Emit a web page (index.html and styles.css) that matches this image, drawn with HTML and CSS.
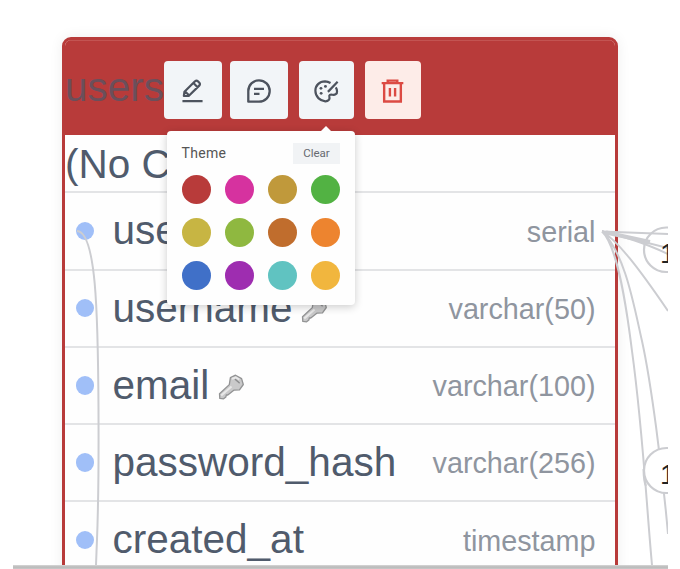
FILE: index.html
```html
<!DOCTYPE html>
<html lang="en">
<head>
<meta charset="utf-8">
<title>Schema diagram</title>
<link rel="stylesheet" href="styles.css">
</head>
<body>
<main class="canvas">
  <section class="table">
    <header class="table-head">
      <span class="table-name">users</span>
      <div class="toolbar">
        <button class="tool" aria-label="Edit"><svg width="23" height="24" viewBox="0 0 24 24"><path d="M3 17.2 3.6 12.8 14.6 1.9Q16.2.6 17.8 2L19 3.2Q20.5 4.8 19 6.4L8 17.2Z M13 3.7l4.3 4.3M4.6 12.8l3.7 3.7M1.5 22.5h21"/></svg></button>
        <button class="tool" aria-label="Comment"><svg width="24" height="24" viewBox="0 0 24 24"><path d="M1.3 22.7V12A10.7 10.7 0 1 1 12 22.7ZM7 9.8h10M7 14.8h5.5"/></svg></button>
        <button class="tool tool-theme" aria-label="Theme"><svg width="25" height="23" viewBox="0 0 26 24"><path d="M17.2 3.1A13 13 0 0 0 11.5 1.5C5.5 1.5 1.4 5.7 1.4 11.3c0 6.1 4.9 10.6 10.3 10.9 3.2.1 5.1-1.8 4.3-4.7-.5-2 .8-2.5 3-2.1 3 .5 5.2-.8 5-3.7-.1-1.5-.5-2.9-1.3-4.1M24.6 1.8 14.5 12.4"/><g class="dots"><circle cx="11.9" cy="6.7" r="1.5"/><circle cx="7.2" cy="8.7" r="1.5"/><circle cx="7.4" cy="13.9" r="1.5"/></g></svg></button>
        <button class="tool tool-delete" aria-label="Delete"><svg width="23" height="24" viewBox="0 0 24 25"><path d="M.7 4.3h22.6M7 4V1.7h10V4M3.3 4.5v19h17.4v-19M9.3 9.3v9M14.7 9.3v9"/></svg></button>
      </div>
    </header>
    <div class="note">(No Comment)</div>
    <div class="row"><i class="port"></i><span class="col">user_id</span><span class="type">serial</span></div>
    <div class="row"><i class="port"></i><span class="col">username</span><svg class="key" width="27" height="27" viewBox="0 0 27 27"><use href="#key"/></svg><span class="type">varchar(50)</span></div>
    <div class="row"><i class="port"></i><span class="col">email</span><svg class="key" width="27" height="27" viewBox="0 0 27 27"><g id="key"><path d="M12.4 3.6 17.5 1.2 23.6 4.6 25.3 10.5 21.5 15.8 15.8 16.2 9.8 21 8.3 20.9 7.9 23 5.6 24.8 1.8 24.4 1.5 19.8 11.3 10.6Z"/><path class="shine" d="M14 4.8l4-1.3 3.3 2M3.2 21.5l10.3-9"/><path class="hole" d="M17.4 5.5l3.8 3.2"/></g></svg><span class="type">varchar(100)</span></div>
    <div class="row"><i class="port"></i><span class="col">password_hash</span><span class="type">varchar(256)</span></div>
    <div class="row"><i class="port"></i><span class="col">created_at</span><span class="type">timestamp</span></div>
  </section>

  <svg class="links" width="655" height="565" viewBox="13 0 655 565">
    <path d="M77 231C96 232 98 310 98.5 410S98 510 96 565"/>
    <path d="M602 231.5 668 234M602 231.5 668 248M602 231.5C625 237 642 242 668 254"/>
    <path class="thick" d="M606 232.5 650 242"/>
    <path d="M602 231.5C617 240 638 267 668 311M602 231.5C625 253 634 306 642 341 651 382 662 466 668 534M602 231.5C618 246 627 311 632 351 643 431 646 500 652 565"/>
    <rect class="badge" x="644" y="227.5" width="60" height="44.5" rx="22.2"/>
    <rect class="badge solid" x="644" y="448" width="60" height="45" rx="22.5"/>
    <path d="M643.5 469Q643.7 482 646 486"/>
    <text x="660" y="263">1</text>
    <text x="660" y="484">1</text>
  </svg>

  <aside class="popover">
    <div class="popover-head"><span>Theme</span><button class="clear">Clear</button></div>
    <div class="swatches">
      <i class="red"></i><i class="pink"></i><i class="gold"></i><i class="green"></i>
      <i class="mustard"></i><i class="lime"></i><i class="brown"></i><i class="orange"></i>
      <i class="blue"></i><i class="purple"></i><i class="teal"></i><i class="amber"></i>
    </div>
  </aside>
</main>
<div class="scroll-edge"></div>
</body>
</html>
```
FILE: styles.css
```css
* { box-sizing: border-box; }
body {
  margin: 0;
  height: 569px;
  overflow: hidden;
  background: #fff;
  font-family: "Liberation Sans", Arial, sans-serif;
  color: #505b6c;
}
button { border: 0; padding: 0; font: inherit; }
.canvas {
  position: relative;
  width: 655px;
  height: 565px;
  margin-left: 13px;
  padding: 37px 0 0 49px;
  overflow: hidden;
}
.scroll-edge {
  width: 655px;
  height: 4px;
  margin-left: 13px;
  background: linear-gradient(#d8d8d8, #b9b9b9 50%, #c9c9c9);
}
.table {
  width: 556px;
  height: 600px;
  border: 3px solid #b83b3a;
  border-radius: 9px;
  background: #fefefe;
  box-shadow: 0 0 14px rgba(0, 0, 0, .07);
  overflow: hidden;
}
.table-head {
  display: flex;
  align-items: center;
  height: 95px;
  background: #b83b3a;
  box-shadow: inset 0 1px #c35452;
}
.table-name {
  width: 98.5px;
  padding-bottom: 2px;
  font-size: 40.5px;
  line-height: 46px;
  color: #6b4f5b;
}
.toolbar { display: flex; gap: 8.5px; padding-top: 5px; }
.tool {
  display: flex;
  align-items: center;
  justify-content: center;
  width: 58px;
  height: 58px;
  border-radius: 4px;
  background: #f2f5f8;
}
.tool svg {
  margin-top: 2px;
  fill: none;
  stroke: #4d535e;
  stroke-width: 2.3;
  stroke-linejoin: round;
}
.tool-theme { width: 55.5px; margin-left: 2px; }
.tool-theme .dots { fill: #4d535e; stroke: none; }
.tool-delete { width: 56px; margin-left: 2px; background: #fdece8; }
.tool-delete svg { stroke: #dc4a43; stroke-width: 2.5; stroke-linejoin: miter; }
.note {
  height: 58.25px;
  border-bottom: 2px solid #e3e4e6;
  font-size: 40.5px;
  line-height: 59px;
  white-space: nowrap;
}
.row {
  display: flex;
  align-items: center;
  height: 77.25px;
  padding: 0 19.5px 0 10.5px;
  border-bottom: 2.5px solid #e3e4e6;
}
.port {
  width: 18.5px;
  height: 18.5px;
  margin-right: 18.5px;
  border-radius: 50%;
  background: #a0bff8;
}
.col { margin-top: -1px; font-size: 40.5px; line-height: 46px; }
.key {
  margin: 4px 0 0 8.5px;
  fill: #c9c9ca;
  stroke: #929394;
  stroke-width: 1.3;
  stroke-linejoin: round;
}
.key .shine { fill: none; stroke: #e8e8e8; stroke-width: 2; }
.key .hole { fill: none; stroke: #8b8c8d; stroke-width: 1.5; stroke-linecap: round; }
.type {
  margin-left: auto;
  font-size: 28.75px;
  line-height: 34px;
  padding-top: 1.5px;
  color: #8f959f;
}
.links { position: absolute; left: 0; top: 0; fill: none; stroke: #cccdd1; stroke-width: 2; }
.links .thick { stroke-width: 4; }
.links .solid { fill: #fff; }
.links .badge { stroke-width: 2.2; }
.links text { fill: #222; stroke: none; font-size: 28px; }
.popover {
  position: absolute;
  left: 154px;
  top: 131px;
  width: 188px;
  height: 174px;
  padding: 12px 15px 12px 14.5px;
  border-radius: 4px;
  background: #fefefe;
  box-shadow: 0 2px 9px rgba(0, 0, 0, .2);
}
.popover::before {
  content: "";
  position: absolute;
  left: 154px;
  top: -5px;
  border: 5px solid transparent;
  border-top: 0;
  border-bottom-color: #fefefe;
}
.popover-head {
  display: flex;
  align-items: center;
  justify-content: space-between;
  height: 20px;
  font-family: Roboto, sans-serif;
  font-size: 14px;
  letter-spacing: .3px;
  color: #555;
}
.clear {
  width: 47px;
  height: 21px;
  background: #f1f3f5;
  color: #666a70;
  font-size: 11.5px;
  letter-spacing: 0;
}
.swatches {
  display: grid;
  grid-template-columns: repeat(4, 29px);
  justify-content: space-between;
  gap: 14px 0;
  margin-top: 12.3px;
}
.swatches i { height: 29px; border-radius: 50%; }
.red { background: #b83b3a; }
.pink { background: #d6329f; }
.gold { background: #c0993b; }
.green { background: #52b243; }
.mustard { background: #c7b543; }
.lime { background: #8fb840; }
.brown { background: #c06d2d; }
.orange { background: #ed842f; }
.blue { background: #4070c8; }
.purple { background: #9e2db0; }
.teal { background: #60c3c1; }
.amber { background: #f1b63e; }
```
